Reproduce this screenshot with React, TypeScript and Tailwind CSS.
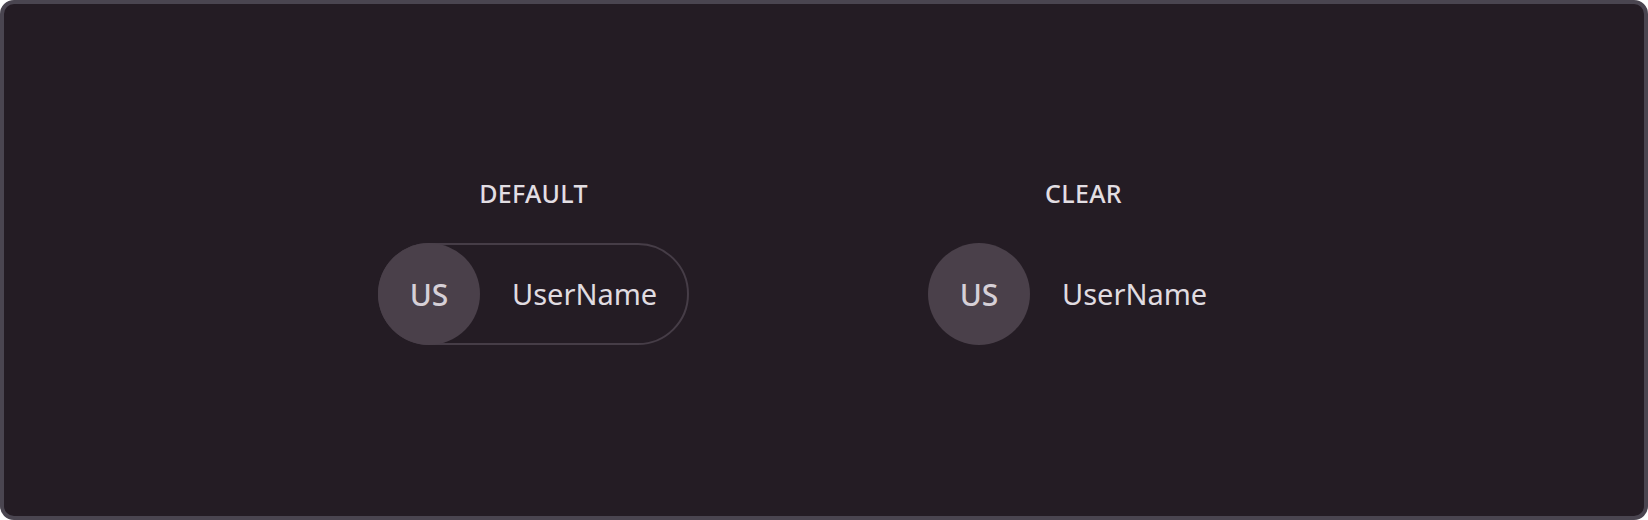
import React from "react";

function Chip({ bordered }: { bordered: boolean }) {
  return (
    <div
      className={
        "flex items-center h-[102px] w-[311px] rounded-full border-2 " +
        (bordered ? "border-[#463d47]" : "border-transparent")
      }
    >
      <div className="-ml-[2px] -my-[2px] flex h-[102px] w-[102px] shrink-0 items-center justify-center rounded-full bg-[#4a404a] text-[30px] font-medium text-[#d6d0d7]">
        US
      </div>
      <span className="ml-[32px] text-[29px] text-[#e0dce1]">UserName</span>
    </div>
  );
}

function Column({ label, bordered }: { label: string; bordered: boolean }) {
  return (
    <div className="flex flex-col items-center">
      <div className="text-[25px] font-medium leading-none tracking-[0.3px] text-[#e2dee3]">{label}</div>
      <div className="mt-[37px]">
        <Chip bordered={bordered} />
      </div>
    </div>
  );
}

export default function App() {
  return (
    <div
      className="flex h-[520px] w-[1648px] items-center justify-center gap-[239px] rounded-[14px] border-4 border-[#4a4550] bg-[#241c24] pr-[31px] pt-[6px]"
      style={{ fontFamily: '"Noto Sans", sans-serif' }}
    >
      <Column label="DEFAULT" bordered />
      <Column label="CLEAR" bordered={false} />
    </div>
  );
}
